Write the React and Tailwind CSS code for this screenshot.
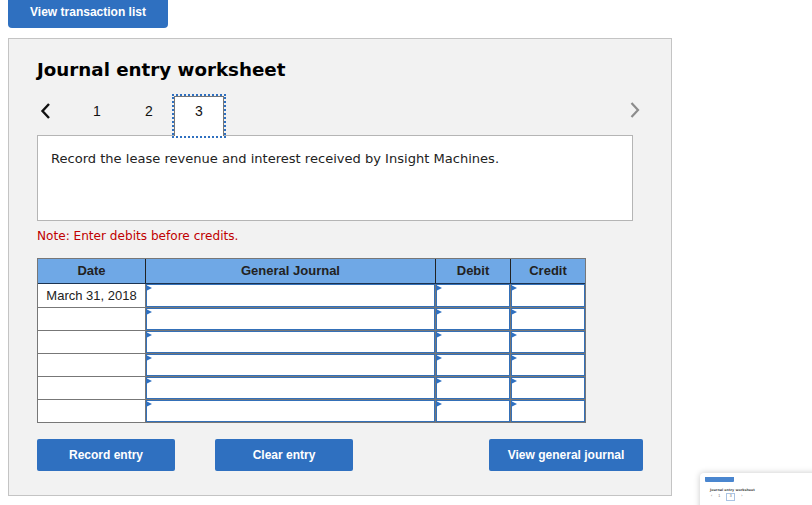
const V = { fontFamily: '"DejaVu Sans", sans-serif' };
const A = { fontFamily: '"Liberation Sans", sans-serif' };

function Btn({ children, w = "w-[138px]" }) {
  return (
    <button className={`${w} block h-8 rounded-[2px] bg-[#2f70c0] text-white text-xs font-bold`} style={A}>
      {children}
    </button>
  );
}

function InputCell() {
  return (
    <div className="relative border border-[#3470b8] bg-white h-full">
      <span className="absolute -left-px top-0 w-0 h-0 border-y-[3px] border-y-transparent border-l-[6px] border-l-[#2f70c0]" />
    </div>
  );
}

function Row({ date, h = "h-[23px]" }) {
  return (
    <div className={`grid grid-cols-[107px_290px_75px_75px] ${h} border-b border-[#777] bg-white`}>
      <div className="flex items-center justify-center text-[13px] text-[#222]">{date}</div>
      <div className="border-l border-[#777]"><InputCell /></div>
      <div className="border-l border-[#777]"><InputCell /></div>
      <div className="border-l border-[#777]"><InputCell /></div>
    </div>
  );
}

export default function App() {
  return (
    <div className="relative w-[812px] h-[505px] overflow-hidden bg-white" style={A}>
      <div className="px-2">
        <button className="block w-40 h-7 rounded-b-[4px] bg-[#2f70c0] text-white text-xs font-bold pb-[4px]">
          View transaction list
        </button>
        <section className="mt-[10px] w-[664px] h-[458px] border border-[#c4c4c4] bg-[#f2f2f2] pl-7 pr-[38px] pt-5">
          <h1 className="text-[18.25px] leading-[22px] font-bold text-black" style={V}>Journal entry worksheet</h1>
          <div className="mt-[13px] flex items-start h-[43px] relative z-10 text-sm text-[#111]">
            <svg width="14" height="18" viewBox="0 0 14 18" className="mt-[8px] ml-[2px]" fill="none" stroke="#111" strokeWidth="2.4">
              <path d="M10 2 3.5 9l6.5 7" />
            </svg>
            <span className="ml-[40px] w-[8px] mt-[7px] text-center">1</span>
            <span className="ml-[44px] w-[8px] mt-[7px] text-center">2</span>
            <span className="ml-[19px] w-[54px] h-[44px] border-2 border-dotted border-[#2f70c0]">
              <span className="flex justify-center h-full bg-white border-x border-t border-[#777] pt-[4px]">3</span>
            </span>
            <svg width="14" height="18" viewBox="0 0 14 18" className="ml-auto mt-[7px] -mr-[9px]" fill="none" stroke="#8c8c8c" strokeWidth="2.2">
              <path d="M3.5 2 10 9l-6.5 7" />
            </svg>
          </div>
          <div className="-mt-[2px] w-[596px] h-[86px] border border-[#b5b5b5] bg-white px-[13px] pt-[15px] text-[13.05px] leading-4 text-[#222]" style={V}>
            Record the lease revenue and interest received by Insight Machines.
          </div>
          <p className="mt-[7px] text-[12.1px] leading-4 text-[#c00000]" style={V}>Note: Enter debits before credits.</p>
          <div className="mt-[14px] w-[549px] border-x border-t border-[#777]">
            <div className="grid grid-cols-[107px_290px_75px_75px] h-[25px] bg-[#6fa8e6] border-b border-[#1c3350] text-[13px] font-bold text-[#222] text-center leading-[24px]">
              <div>Date</div>
              <div className="border-l border-[#222]">General Journal</div>
              <div className="border-l border-[#222]">Debit</div>
              <div className="border-l border-[#222]">Credit</div>
            </div>
            <Row date="March 31, 2018" h="h-[24px]" />
            <Row />
            <Row />
            <Row />
            <Row />
            <Row />
          </div>
          <div className="mt-4 flex w-[606px]">
            <Btn>Record entry</Btn>
            <div className="ml-10"><Btn>Clear entry</Btn></div>
            <div className="ml-auto"><Btn w="w-[154px]">View general journal</Btn></div>
          </div>
        </section>
      </div>
      <aside className="absolute left-[700px] top-[473px] w-[130px] h-[50px] rounded-[4px] bg-white shadow-[0_0_6px_rgba(0,0,0,0.22)] pl-[5px] pt-[4px]">
        <div className="w-[29px] h-[5px] rounded-b-[1px] bg-[#4a86cf]" />
        <div className="mt-[6px] ml-[5px] text-[3.3px] font-bold leading-[4px] text-[#444]" style={V}>Journal entry worksheet</div>
        <div className="mt-[1px] ml-[6px] flex items-center gap-[6px] text-[3.5px] text-[#666]">
          <span>‹</span><span>1</span>
          <span className="w-[9px] h-[8px] border border-[#a9c3e3] flex items-center justify-center">3</span><span>›</span>
        </div>
      </aside>
    </div>
  );
}
